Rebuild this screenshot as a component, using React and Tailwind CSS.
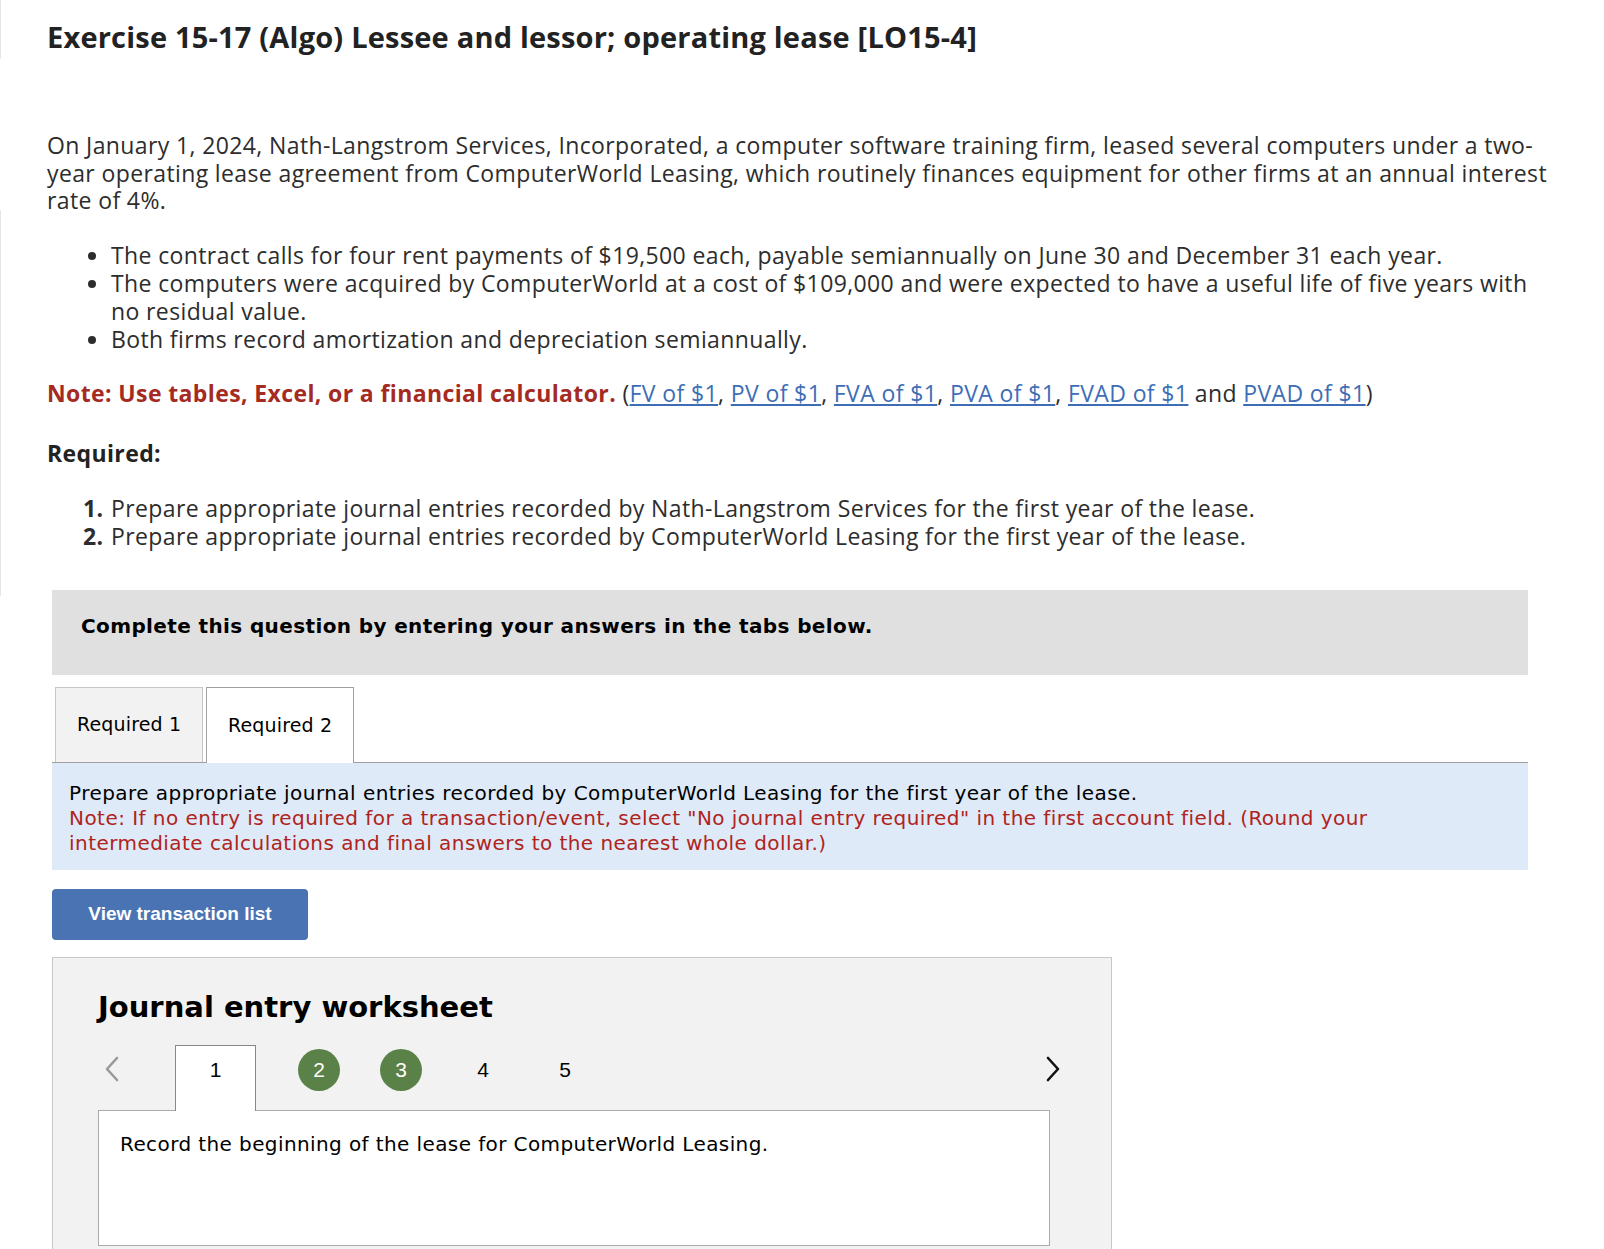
import React from 'react';

const links = ['FV of $1', 'PV of $1', 'FVA of $1', 'PVA of $1', 'FVAD of $1'];

const Chevron = ({ dir, color }) => (
  <svg width="16" height="26" viewBox="0 0 16 26" fill="none">
    <path
      d={dir === 'left' ? 'M13 2 L3 13 L13 24' : 'M3 2 L13 13 L3 24'}
      stroke={color}
      strokeWidth="2.6"
      strokeLinecap="round"
      strokeLinejoin="round"
    />
  </svg>
);

const App = () => {
  return (
    <div className="relative bg-white w-[1604px] min-h-[1249px] overflow-hidden text-[#2d2d2d] font-['Open_Sans',sans-serif]">
      {/* faint frame lines on the left edge */}
      <div className="absolute left-0 top-0 w-px h-[59px] bg-[#e6e6e6]" />
      <div className="absolute left-0 top-[210px] w-px h-[386px] bg-[#e6e6e6]" />

      <div className="pl-[47px] w-[1560px] text-[23px] tracking-[0.38px]">
        <h1 className="pt-[20px] text-[29px] leading-[34px] tracking-[0.2px] font-bold text-[#222]">
          Exercise 15-17 (Algo) Lessee and lessor; operating lease [LO15-4]
        </h1>

        <p className="mt-[78px] leading-[27.5px]">
          On January 1, 2024, Nath-Langstrom Services, Incorporated, a computer software training firm, leased several computers under a two-year operating lease agreement from ComputerWorld Leasing, which routinely finances equipment for other firms at an annual interest rate of 4%.
        </p>

        <ul className="mt-[26px] pl-[64px] list-disc leading-[28px]">
          <li>The contract calls for four rent payments of $19,500 each, payable semiannually on June 30 and December 31 each year.</li>
          <li>The computers were acquired by ComputerWorld at a cost of $109,000 and were expected to have a useful life of five years with no residual value.</li>
          <li>Both firms record amortization and depreciation semiannually.</li>
        </ul>

        <p className="mt-[26px] leading-[28px]">
          <span className="font-bold text-[#a52a22]">Note: Use tables, Excel, or a financial calculator.</span>{' '}
          (
          {links.map((l, i) => (
            <span key={l}>
              <a className="text-[#3d6eb5] underline underline-offset-2">{l}</a>
              {i < links.length - 1 ? ', ' : ''}
            </span>
          ))}{' '}
          and <a className="text-[#3d6eb5] underline underline-offset-2">PVAD of $1</a>)
        </p>

        <p className="mt-[32px] leading-[28px] font-bold text-[#222]">Required:</p>

        <ol className="mt-[27px] pl-[64px] leading-[28.5px]">
          <li className="flex">
            <span className="w-0 -ml-[28px] mr-[28px] font-bold">1.</span>
            <span>Prepare appropriate journal entries recorded by Nath-Langstrom Services for the first year of the lease.</span>
          </li>
          <li className="flex">
            <span className="w-0 -ml-[28px] mr-[28px] font-bold">2.</span>
            <span>Prepare appropriate journal entries recorded by ComputerWorld Leasing for the first year of the lease.</span>
          </li>
        </ol>
      </div>

      <div className="ml-[52px] w-[1476px] mt-[39px] font-['DejaVu_Sans',Verdana,sans-serif] text-black">
        <div className="h-[85px] bg-[#e0e0e0] pl-[29px] pt-[24px]">
          <p className="text-[20px] leading-[24px] tracking-[0.38px] font-bold">Complete this question by entering your answers in the tabs below.</p>
        </div>

        <div className="mt-[12px] flex items-end gap-[3px] pl-[3px] border-b border-[#a0a0a0] text-[19px] tracking-[0.15px]">
          <div className="w-[148px] h-[75px] bg-[#f2f2f2] border border-b-0 border-[#c6c6c6] flex items-center pl-[21px]">
            Required 1
          </div>
          <div className="w-[148px] h-[76px] bg-white border border-b-0 border-[#a0a0a0] -mb-px flex items-center pl-[21px]">
            Required 2
          </div>
        </div>

        <div className="bg-[#deeaf7] pl-[17px] pt-[18px] pb-[14px] text-[20px] leading-[25px] tracking-[0.45px]">
          <p>Prepare appropriate journal entries recorded by ComputerWorld Leasing for the first year of the lease.</p>
          <p className="text-[#b0231c] w-[1345px]">
            Note: If no entry is required for a transaction/event, select "No journal entry required" in the first account field. (Round your intermediate calculations and final answers to the nearest whole dollar.)
          </p>
        </div>

        <button className="mt-[19px] w-[256px] h-[51px] rounded-[4px] bg-[#4a73b3] text-white text-[19px] font-bold font-['Liberation_Sans',Arial,sans-serif]">
          View transaction list
        </button>

        <div className="mt-[17px] w-[1060px] h-[320px] bg-[#f2f2f2] border border-[#c8c8c8] pl-[45px] pr-[62px]">
          <h2 className="pt-[32px] text-[29px] leading-[34px] font-bold">Journal entry worksheet</h2>

          <div className="mt-[21px] flex h-[65px]">
            <div className="w-[77px] pt-[11px]">
              <span className="ml-[6px] block"><Chevron dir="left" color="#999" /></span>
            </div>
            <div className="w-[81px] h-[66px] -mb-px bg-white border border-b-0 border-[#888] pt-[11px] text-center text-[21px] leading-[26px] font-['Liberation_Sans',Arial,sans-serif] relative z-10">
              1
            </div>
            <div className="flex items-start font-['Liberation_Sans',Arial,sans-serif] text-[21px] leading-[26px]">
              <span className="mt-[4px] ml-[42px] w-[42px] h-[42px] rounded-full bg-[#5a8248] text-white flex items-center justify-center">2</span>
              <span className="mt-[4px] ml-[40px] w-[42px] h-[42px] rounded-full bg-[#5a8248] text-white flex items-center justify-center">3</span>
              <span className="mt-[12px] ml-[40px] w-[42px] text-center">4</span>
              <span className="mt-[12px] ml-[40px] w-[42px] text-center">5</span>
            </div>
            <div className="flex-1 flex justify-end pt-[11px]">
              <span className="-mr-[12px] block"><Chevron dir="right" color="#111" /></span>
            </div>
          </div>

          <div className="w-[952px] h-[136px] bg-white border border-[#aaa] pl-[21px] pt-[20px]">
            <p className="text-[20px] leading-[26px] tracking-[0.4px]">Record the beginning of the lease for ComputerWorld Leasing.</p>
          </div>
        </div>
      </div>
    </div>
  );
};

export default App;
